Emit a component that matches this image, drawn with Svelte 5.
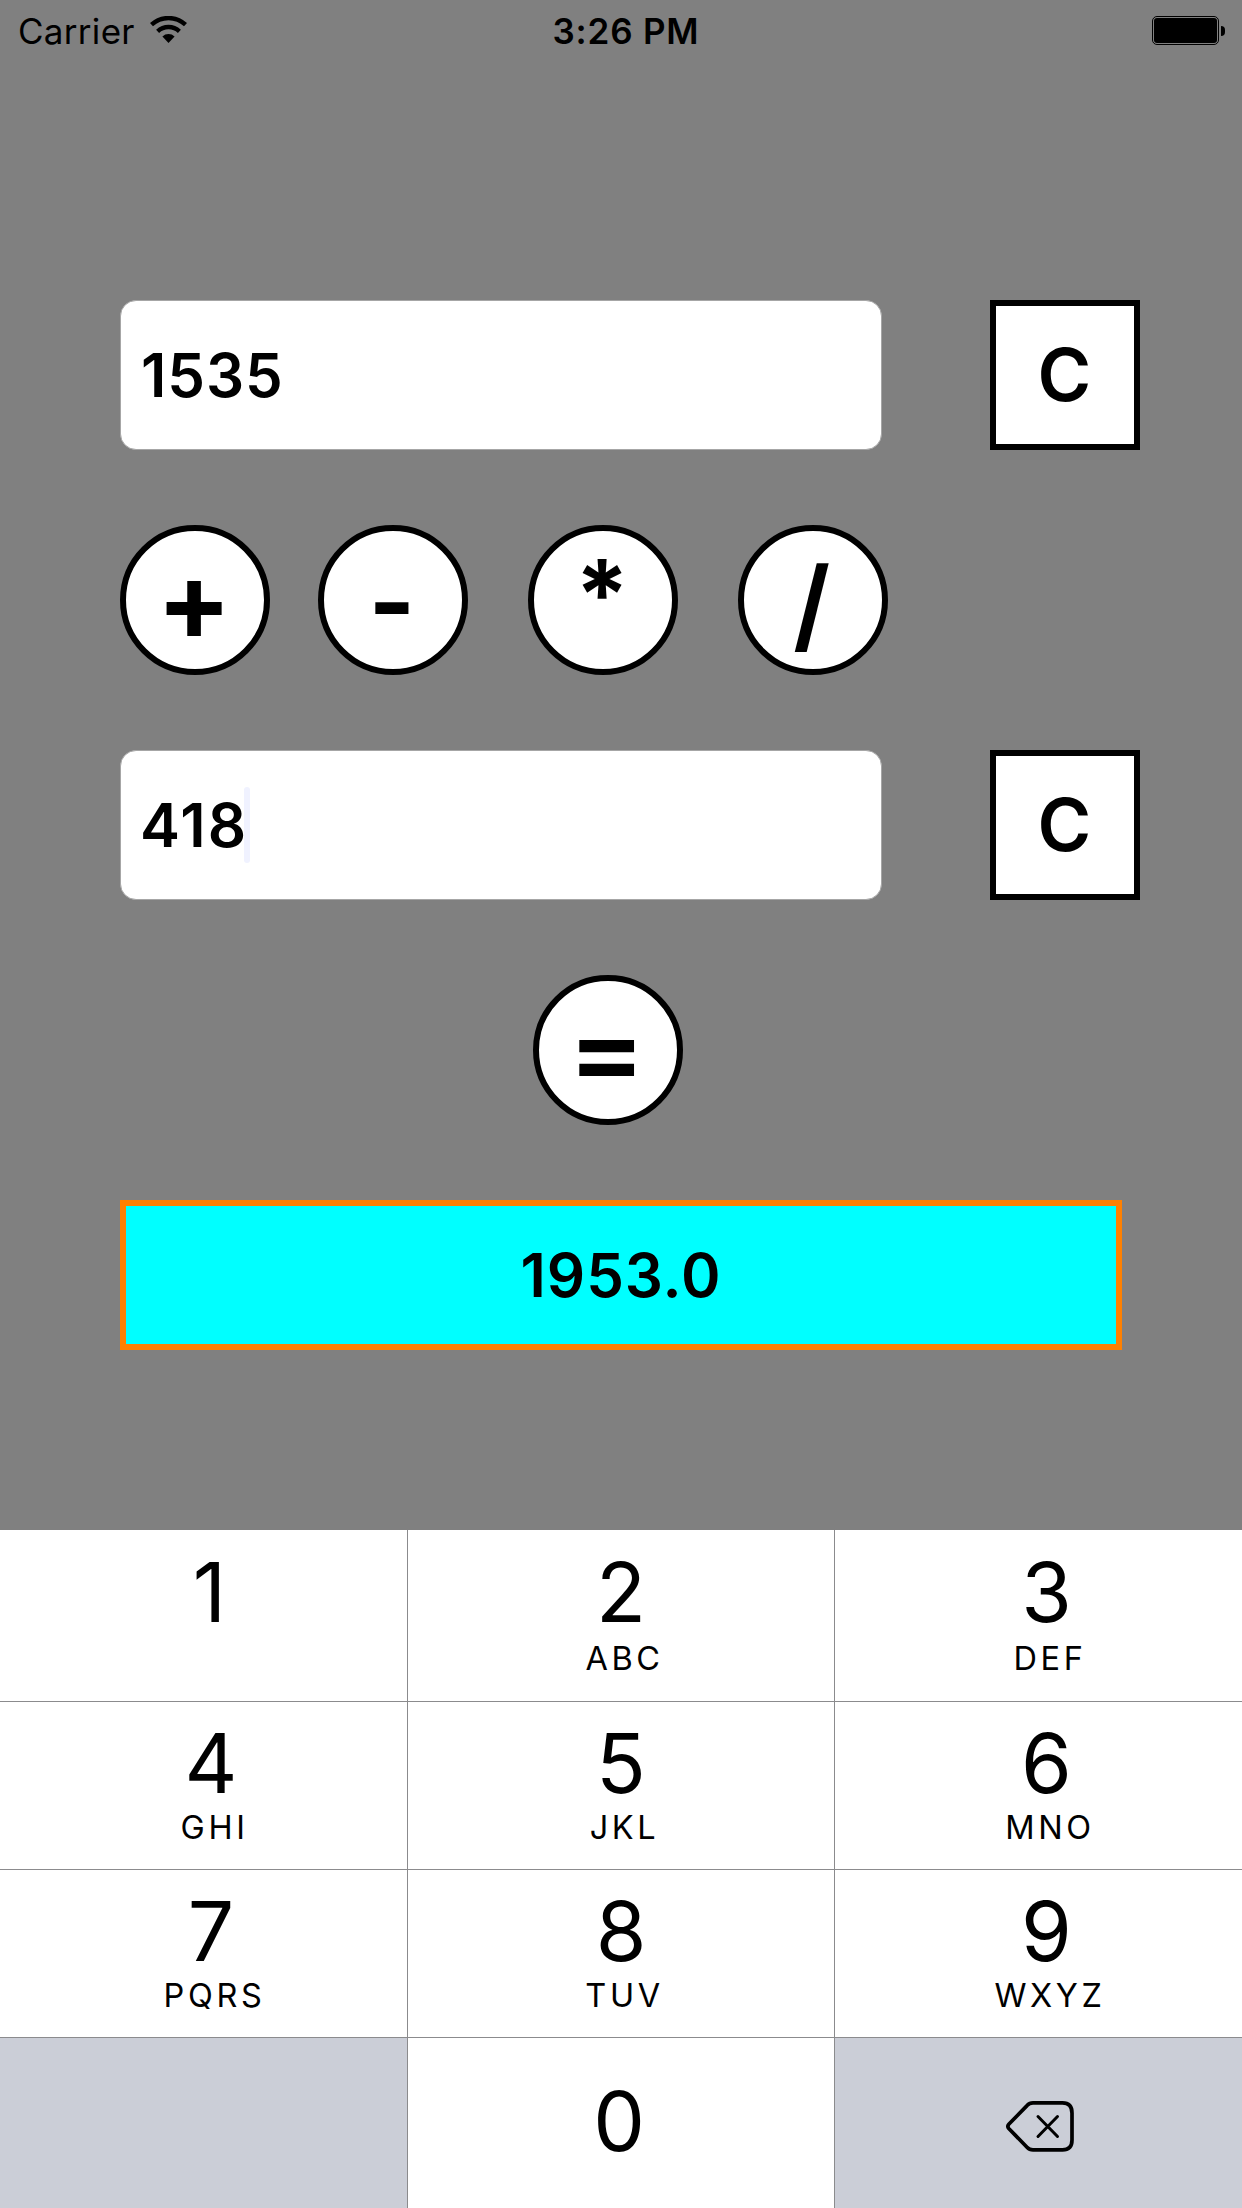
<script>
  let first = $state('1535');
  let second = $state('418');
  let result = $state('1953.0');

  const operators = [
    { sign: '+', name: 'plus' },
    { sign: '-', name: 'minus' },
    { sign: '*', name: 'times' },
    { sign: '/', name: 'divide' }
  ];

  const keys = [
    ['1', ''], ['2', 'ABC'], ['3', 'DEF'],
    ['4', 'GHI'], ['5', 'JKL'], ['6', 'MNO'],
    ['7', 'PQRS'], ['8', 'TUV'], ['9', 'WXYZ']
  ];
</script>

<div class="screen">
  <header class="status">
    <div class="network">
      <span class="carrier">Carrier</span>
      <svg class="wifi" viewBox="150 16 37 27" width="37" height="27" aria-hidden="true">
        <g fill="none" stroke="#000" stroke-width="4.4">
          <path d="M151.5 24.7A25 25 0 0 1 185.5 24.7" />
          <path d="M157.6 31.3A16 16 0 0 1 179.4 31.3" />
        </g>
        <path d="M168.5 43L162.4 36.4A9 9 0 0 1 174.6 36.4Z" />
      </svg>
    </div>
    <span class="time">3:26 PM</span>
    <div class="power">
      <div class="battery"><div class="charge"></div></div>
      <div class="terminal"></div>
    </div>
  </header>

  <main class="calculator">
    <div class="entry">
      <div class="field">{first}</div>
      <button class="clear" onclick={() => (first = '')}>C</button>
    </div>

    <div class="operators">
      {#each operators as op}
        <button class="round"><span class="sign {op.name}">{op.sign}</span></button>
      {/each}
    </div>

    <div class="entry">
      <div class="field active"><span>{second}</span><i class="caret"></i></div>
      <button class="clear" onclick={() => (second = '')}>C</button>
    </div>

    <button class="round equals"><span class="sign equal">=</span></button>

    <div class="result">{result}</div>
  </main>

  <div class="keypad">
    {#each keys as [digit, letters]}
      <button class="key" class:single={!letters}>
        <span class="digit">{digit}</span>
        {#if letters}<span class="letters">{letters}</span>{/if}
      </button>
    {/each}
    <div class="key blank"></div>
    <button class="key zero"><span class="digit">0</span></button>
    <button class="key erase" aria-label="Delete">
      <svg viewBox="1006 2101 68 51" width="68" height="51" fill="none" stroke="#000" stroke-linecap="round" stroke-linejoin="round">
        <path stroke-width="3.7" d="M1033 2102.9H1062.5Q1072 2102.9 1072 2113V2140Q1072 2149.9 1062.5 2149.9H1033Q1029.500 2149.900 1027 2147.200L1009 2128.800Q1006.800 2126.400 1009 2124L1027 2105.600Q1029.500 2102.900 1033 2102.900Z" />
        <path stroke-width="3" d="M1038 2116.500L1057.500 2136.500M1057.500 2116.500L1038 2136.500" />
      </svg>
    </button>
  </div>
</div>

<style>
  :global(body) {
    background: #808080;
  }

  .screen {
    display: flex;
    flex-direction: column;
    width: 1242px;
    height: 2208px;
    overflow: hidden;
    background: #808080;
    color: #000;
    font-family: Inter, "Liberation Sans", sans-serif;
  }

  button {
    margin: 0;
    padding: 0;
    border: 0;
    color: inherit;
    font: inherit;
  }

  /* Status bar */
  .status {
    display: grid;
    grid-template-columns: 1fr auto 1fr;
    box-sizing: border-box;
    height: 60px;
    padding: 0 17px 0 18px;
    font-size: 35px;
    line-height: 35px;
  }

  .network {
    display: flex;
    align-items: flex-start;
  }

  .carrier {
    width: 132px;
    padding-top: 14px;
    letter-spacing: 0.3px;
  }

  .wifi {
    margin-top: 16px;
  }

  .time {
    padding: 14px 0 0 9px;
    font-weight: 600;
    letter-spacing: 0.8px;
  }

  .power {
    display: flex;
    justify-content: flex-end;
    align-items: center;
    height: 29px;
    margin-top: 16px;
    gap: 2px;
  }

  .battery {
    box-sizing: border-box;
    width: 67px;
    height: 29px;
    padding: 1px;
    border: 1px solid #000;
    border-radius: 5px;
  }

  .charge {
    height: 100%;
    border-radius: 3px;
    background: #000;
  }

  .terminal {
    width: 4px;
    height: 10px;
    border-radius: 0 4px 4px 0;
    background: #000;
  }

  /* Calculator */
  .calculator {
    display: flex;
    flex-direction: column;
    gap: 75px;
    height: 1230px;
    padding: 240px 102px 0 120px;
  }

  .entry {
    display: flex;
    gap: 108px;
  }

  .field {
    display: flex;
    align-items: center;
    box-sizing: border-box;
    width: 762px;
    height: 150px;
    padding: 0 0 1px 20px;
    border: 1px solid #a6a6a6;
    border-radius: 16px;
    background: #fff;
    font-size: 60px;
    font-weight: 600;
    line-height: 60px;
    letter-spacing: 0.9px;
  }

  .field.active {
    padding-left: 19px;
    letter-spacing: 2.2px;
  }

  .caret {
    width: 6px;
    height: 76px;
    margin-left: -4px;
    border-radius: 3px;
    background: #f0f2ff;
  }

  .clear {
    box-sizing: border-box;
    width: 150px;
    height: 150px;
    padding: 0 1px 2px 0;
    border: 6px solid #000;
    background: #fff;
    font-size: 73px;
    font-weight: 600;
    line-height: 73px;
  }

  .operators {
    display: grid;
    grid-template-columns: 198px 210px 210px 150px;
  }

  .round {
    display: grid;
    place-items: center;
    box-sizing: border-box;
    width: 150px;
    height: 150px;
    border: 6px solid #000;
    border-radius: 50%;
    background: #fff;
    font-weight: 650;
  }

  .equals {
    margin-left: 412.5px;
  }

  .sign {
    line-height: 1;
  }

  .plus {
    font-size: 110px;
    transform: translateX(-1px);
  }

  .minus {
    font-size: 100px;
    transform: translate(-1px, 1.5px);
  }

  .times {
    font-size: 97px;
    transform: translate(-1px, -6.5px);
  }

  .divide {
    font-size: 102px;
    transform: translate(-1px, 4px) scaleX(0.92);
  }

  .equal {
    font-size: 105px;
    transform: translateX(-1px) scale(1.07, 0.95);
  }

  .result {
    display: grid;
    place-items: center;
    box-sizing: border-box;
    width: 1002px;
    height: 150px;
    padding-bottom: 1px;
    border: 6px solid #ff8000;
    background: #0ff;
    font-size: 60px;
    font-weight: 600;
    line-height: 60px;
    letter-spacing: 0.9px;
  }

  /* Keypad */
  .keypad {
    display: grid;
    grid-template-columns: 407px 426px 407px;
    grid-template-rows: 171px 167px 167px 170px;
    gap: 1px;
    background: #8b8b8d;
  }

  .key {
    display: flex;
    flex-direction: column;
    align-items: center;
    box-sizing: border-box;
    padding-top: 21px;
    background: #fff;
  }

  .key:nth-child(-n + 3) {
    padding-top: 22px;
  }

  .key:nth-child(3n + 1) {
    padding-left: 15px;
  }

  .key:nth-child(3n) {
    padding-left: 16px;
  }

  .key.single {
    padding-left: 12px;
  }

  .digit {
    font-size: 82px;
    line-height: 82px;
  }

  .letters {
    margin-top: 7px;
    padding-left: 7px;
    font-size: 32.5px;
    line-height: 32px;
    letter-spacing: 3.6px;
  }

  .key:nth-child(-n + 3) .letters {
    margin-top: 9px;
  }

  .key.zero {
    padding: 43px 4px 0 0;
  }

  .key.blank,
  .key.erase {
    background: #cbced7;
  }

  .key.erase {
    padding: 63px 0 0 3px;
  }
</style>
